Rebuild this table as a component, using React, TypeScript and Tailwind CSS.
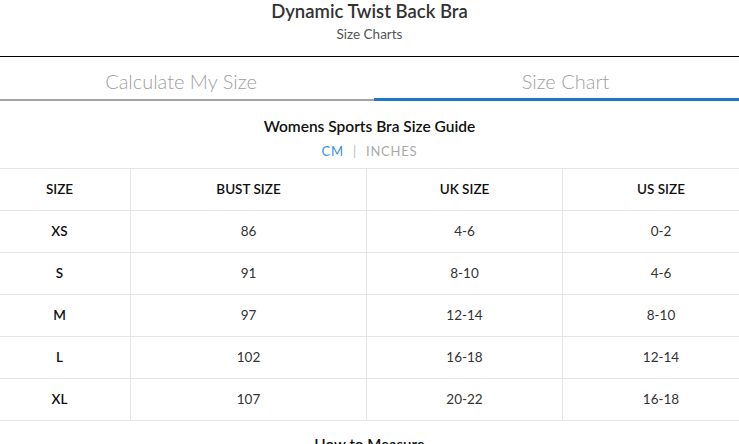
const rows = [
  { size: "XS", bust: "86", uk: "4-6", us: "0-2" },
  { size: "S", bust: "91", uk: "8-10", us: "4-6" },
  { size: "M", bust: "97", uk: "12-14", us: "8-10" },
  { size: "L", bust: "102", uk: "16-18", us: "12-14" },
  { size: "XL", bust: "107", uk: "20-22", us: "16-18" },
];

const cols = "grid grid-cols-[142px_236px_196px_196px]";

const App = () => {
  return (
    <div className="w-[739px] h-[444px] overflow-hidden bg-white font-['Lato',sans-serif]">
      {/* HEADER */}
      <div className="h-[57px] flex flex-col items-center border-b border-black">
        <h1 className="text-[18.5px] font-semibold text-[#333] leading-[22px]">
          Dynamic Twist Back Bra
        </h1>
        <p className="mt-[4px] text-[13.5px] text-[#555] leading-[16px]">Size Charts</p>
      </div>

      {/* TABS */}
      <div className="flex h-[44px] items-end">
        <div className="w-[374px] h-full flex flex-col">
          <div className="flex-1 flex items-center justify-center text-[20px] font-light text-[#a0a0a0] pt-[6px] pr-[12px]">
            Calculate My Size
          </div>
          <div className="h-[2px] bg-[#a3a3a3]" />
        </div>
        <div className="flex-1 h-full flex flex-col">
          <div className="flex-1 flex items-center justify-center text-[20px] font-light text-[#a0a0a0] pt-[7px] pl-[18px]">
            Size Chart
          </div>
          <div className="h-[3px] bg-[#2474c9]" />
        </div>
      </div>

      {/* GUIDE */}
      <div className="flex flex-col items-center pt-[15px]">
        <h2 className="text-[15.5px] font-semibold text-[#111] leading-[20px]">
          Womens Sports Bra Size Guide
        </h2>
        <div className="mt-[6px] flex items-center gap-[9px] text-[13px] tracking-[0.8px] leading-[18px]">
          <span className="text-[#3a8fd9]">CM</span>
          <span className="text-[#bbb]">|</span>
          <span className="text-[#aaa]">INCHES</span>
        </div>
      </div>

      {/* TABLE */}
      <div className="mt-[8px] ml-[-11px] w-[770px] border-t border-[#e6e6e6] text-[13.5px]">
        <div className={`${cols} h-[42px] border-b border-[#e6e6e6] font-semibold text-[#111]`}>
          <div className="flex items-center justify-center border-r border-[#e6e6e6]">SIZE</div>
          <div className="flex items-center justify-center border-r border-[#e6e6e6]">BUST SIZE</div>
          <div className="flex items-center justify-center border-r border-[#e6e6e6]">UK SIZE</div>
          <div className="flex items-center justify-center">US SIZE</div>
        </div>
        {rows.map((r) => (
          <div key={r.size} className={`${cols} h-[42px] border-b border-[#e6e6e6] text-[#333]`}>
            <div className="flex items-center justify-center border-r border-[#e6e6e6] font-semibold text-[#111]">
              {r.size}
            </div>
            <div className="flex items-center justify-center border-r border-[#e6e6e6]">{r.bust}</div>
            <div className="flex items-center justify-center border-r border-[#e6e6e6]">{r.uk}</div>
            <div className="flex items-center justify-center">{r.us}</div>
          </div>
        ))}
      </div>

      <div className="pt-[12px] text-center text-[15px] font-semibold text-[#111]">How to Measure</div>
    </div>
  );
};

export default App;
